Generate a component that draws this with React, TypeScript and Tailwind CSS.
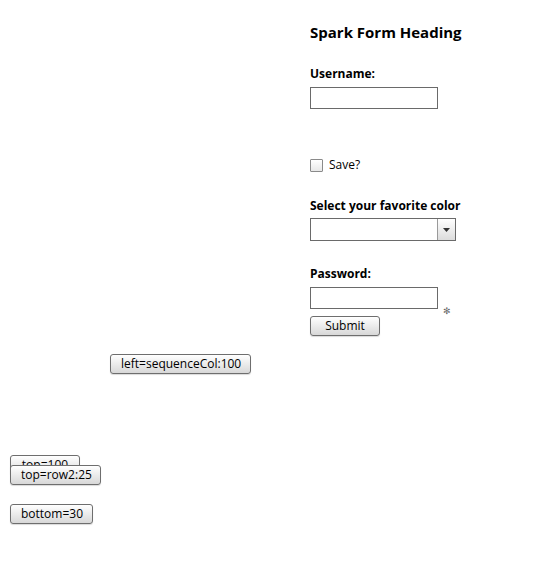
import React from 'react';

const btn =
  "h-[20px] px-[10px] rounded-[3px] border border-[#6e6e6e] bg-gradient-to-b from-white to-[#d8d8d8] text-[12px] leading-[18px] text-black shadow-[0_1px_1px_rgba(0,0,0,0.15)]";

function SparkButton({ label, className }: { label: string; className: string }) {
  return <button className={`${btn} absolute ${className}`}>{label}</button>;
}

export default function App() {
  return (
    <div className="relative w-[557px] h-[564px] bg-white text-black font-['Open_Sans',sans-serif]">
      {/* form column */}
      <div className="flex flex-col pl-[310px] pt-[22px]">
        <h1 className="text-[15px] font-bold leading-[20px]">Spark Form Heading</h1>

        <label className="mt-[24px] text-[12px] font-bold leading-[16px]">Username:</label>
        <input className="mt-[5px] w-[128px] h-[22px] border border-[#6a6a6a] bg-white" />

        <label className="mt-[48px] flex items-center gap-[6px] text-[12px] leading-[16px]">
          <span className="w-[13px] h-[13px] border border-[#8a8a8a] rounded-[1px] bg-gradient-to-b from-white to-[#e8e8e8]" />
          Save?
        </label>

        <label className="mt-[25px] text-[12px] font-bold leading-[16px]">Select your favorite color</label>
        <div className="mt-[4px] flex w-[146px] h-[23px] border border-[#6a6a6a] bg-white">
          <div className="flex-1" />
          <div className="w-[18px] border-l border-[#9a9a9a] bg-gradient-to-b from-white to-[#dcdcdc] flex items-center justify-center">
            <svg width="7" height="4" viewBox="0 0 7 4">
              <path d="M0 0h7L3.5 4z" fill="#333" />
            </svg>
          </div>
        </div>

        <label className="mt-[25px] text-[12px] font-bold leading-[16px]">Password:</label>
        <div className="mt-[5px] flex items-end">
          <input type="password" className="w-[128px] h-[22px] border border-[#6a6a6a] bg-white" />
          <span className="ml-[5px] mb-[-7px] text-[9px] leading-[10px] text-[#666]">✻</span>
        </div>
        <div className="relative mt-[7px] h-[20px]">
          <SparkButton label="Submit" className="left-0 top-0 w-[70px]" />
        </div>
      </div>

      <SparkButton label="left=sequenceCol:100" className="left-[110px] top-[354px] w-[141px]" />
      <SparkButton label="top=100" className="left-[10px] top-[455px] w-[70px]" />
      <SparkButton label="top=row2:25" className="left-[10px] top-[465px] w-[91px]" />
      <SparkButton label="bottom=30" className="left-[10px] top-[504px] w-[83px]" />
    </div>
  );
}
